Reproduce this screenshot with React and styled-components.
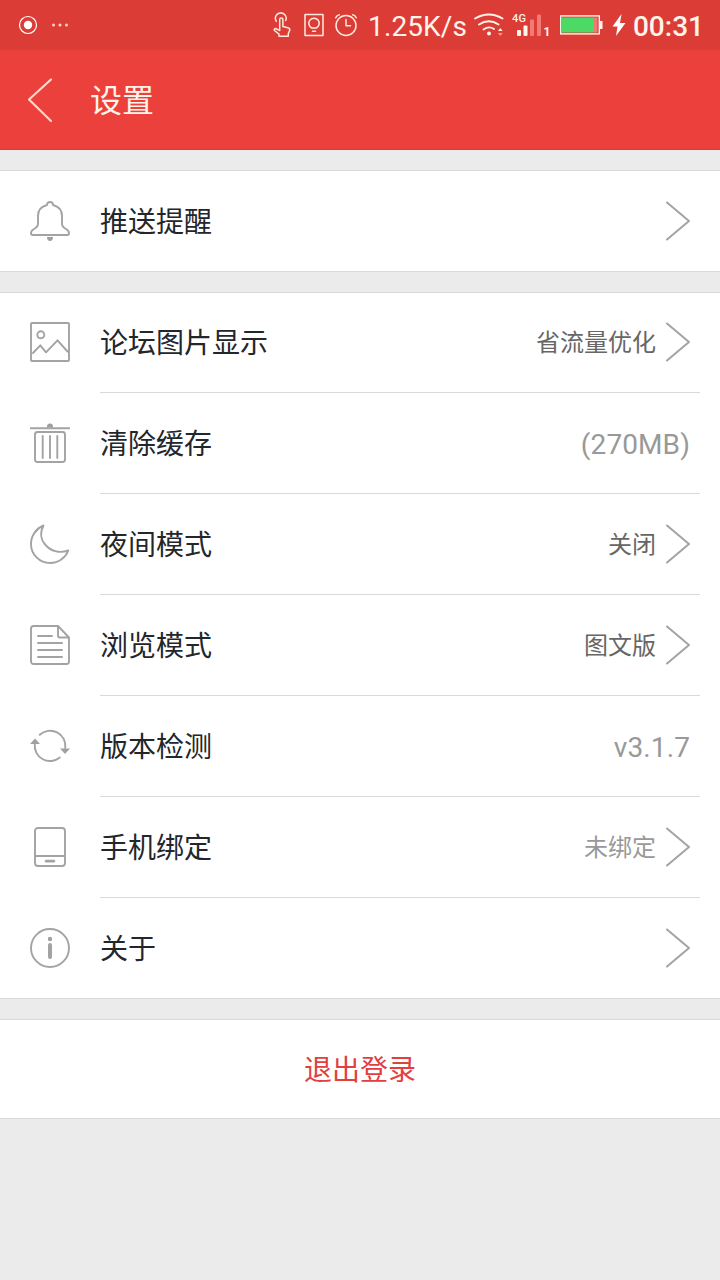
import React from "react";
import styled, { createGlobalStyle, css } from "styled-components";

const GlobalStyle = createGlobalStyle`
  * {
    box-sizing: border-box;
  }

  body {
    margin: 0;
    background: #ebebeb;
    font-family: Roboto, "Noto Sans CJK SC", sans-serif;
  }
`;

const Screen = styled.div`
  min-height: 1280px;
  background: #ebebeb;
`;

const StatusBar = styled.div`
  display: flex;
  align-items: center;
  justify-content: space-between;
  height: 50px;
  padding: 0 16px 0 18px;
  background: #db3d36;
  color: #fff3ea;
`;

const StatusGroup = styled.div`
  display: flex;
  align-items: center;
  height: 50px;
  gap: ${p => p.$gap || 0};

  svg {
    display: block;
    flex: none;
  }
`;

const StatusText = styled.span`
  padding-top: 3px;
  font-size: 28px;
  font-weight: ${p => (p.$bold ? 500 : 400)};
  line-height: 50px;
  letter-spacing: ${p => p.$spacing || 0};
`;

const Header = styled.header`
  display: flex;
  align-items: center;
  height: 100px;
  padding-left: 26px;
  gap: 36px;
  background: #ec403c;
  border-bottom: 1px solid #e6392f;
`;

const Title = styled.h1`
  margin: 0;
  padding-top: 2px;
  color: #fff3ea;
  font-size: 32px;
  font-weight: 400;
  line-height: 48px;
`;

const Content = styled.main`
  display: flex;
  flex-direction: column;
  gap: 20px;
  padding-top: 20px;
`;

const Card = styled.section`
  background: #fff;
  border-top: 1px solid #d9d9d9;
  border-bottom: 1px solid #d9d9d9;

  /* the long list keeps its top line inside the first row */
  ${p =>
    p.$list &&
    css`
      border: 0;
      box-shadow: inset 0 1px #d9d9d9, inset 0 -1px #d9d9d9;
    `}
`;

const Row = styled.div`
  display: flex;
  align-items: center;
  height: 100px;
  padding: 0 28px 0 30px;

  svg {
    display: block;
    flex: none;
  }
`;

const Divider = styled.div`
  height: 1px;
  margin: 0 20px 0 100px;
  background: ${p => (p.$last ? "transparent" : "#d9d9d9")};
`;

const Label = styled.span`
  flex: 1;
  padding: 4px 0 0 30px;
  color: #23262b;
  font-size: 28px;
  line-height: 40px;
`;

const Value = styled.span`
  margin-right: 8px;
  padding-top: 2px;
  color: ${p => (p.$muted ? "#999" : "#666")};
  font-size: 24px;
  line-height: 36px;
`;

const Figure = styled.span`
  margin-right: 2px;
  padding-top: 3px;
  color: #999;
  font-size: 28px;
  line-height: 36px;
  letter-spacing: 0.1px;
`;

const Logout = styled.button`
  display: block;
  width: 100%;
  height: 98px;
  padding: 4px 0 0;
  border: 0;
  background: none;
  color: #e04040;
  font-family: inherit;
  font-size: 28px;
  line-height: 94px;
`;

const StyledIcon = styled.svg`
  width: 40px;
  height: 40px;
  fill: none;
  stroke: #a3a3a3;
  stroke-width: 1.9;
  stroke-linecap: round;
  stroke-linejoin: round;

  .solid {
    fill: #a0a0a0;
    stroke: none;
  }
`;

const Icon = ({ children }) => (
  <StyledIcon viewBox="0 0 40 40">{children}</StyledIcon>
);

const icons = {
  bell: (
    <Icon>
      <path d="M17 4C17 2 18.200 1 20 1s3 1 3 3C29 5.500 32 9.500 32 15v7.500c0 2.500 1 4 4 5.500 2 1.200 3 2.500 3 4.200 0 1.300-.700 1.800-1.700 1.800H2.700C1.700 34 1 33.500 1 32.200 1 30.500 2 29.200 4 28c3-1.500 4-3 4-5.500V15C8 9.500 11 5.500 17 4z" />
      <path className="solid" d="M17 36h6c0 2.700-1.200 4-3 4s-3-1.300-3-4z" />
    </Icon>
  ),
  image: (
    <Icon>
      <rect x="1" y="1" width="38" height="38" rx="1" />
      <circle cx="10.800" cy="12.800" r="3.500" />
      <path d="M3 31l7.300-7.700 5.700 7 11.500-12L37.500 29.500" />
    </Icon>
  ),
  trash: (
    <Icon>
      <path d="M1 5.200h38" strokeLinecap="square" />
      <path className="solid" d="M16.800 4.500a3.200 4 0 0 1 6.400 0z" />
      <rect x="5" y="9" width="30" height="30" rx="2.500" />
      <path d="M12.700 13v22M20 13v22M27.300 13v22" />
    </Icon>
  ),
  moon: (
    <Icon>
      <path d="M13.500 1.500A20 20 0 0 0 1 20a19 19 0 0 0 19 19c8.500 0 15.500-5 18.300-12.500C30 29.500 21.500 27.500 16 21.500 11 16.500 9.500 9 13.500 1.500z" />
    </Icon>
  ),
  doc: (
    <Icon>
      <path d="M28 1H3.500A2.500 2.500 0 0 0 1 3.500v33A2.500 2.500 0 0 0 3.500 39h33a2.500 2.500 0 0 0 2.500-2.500V12.500L28 1v9.500a2 2 0 0 0 2 2h9" />
      <path d="M8 11h14M8 18h24M8 25h24M8 32h24" />
    </Icon>
  ),
  refresh: (
    <Icon>
      <path d="M9.700 8.800A15.300 15.300 0 0 1 35.300 22M29.800 31.500A15.300 15.300 0 0 1 4.800 18" />
      <path className="solid" d="M0 18l5-5.500L10 18zM30 22.500h10L35 28z" />
    </Icon>
  ),
  phone: (
    <Icon>
      <rect x="5" y="1" width="30" height="38" rx="3" />
      <path d="M5 29h30" />
      <path d="M16.200 34.200h7.600" strokeWidth="2.800" />
    </Icon>
  ),
  info: (
    <Icon>
      <circle cx="20" cy="20" r="19" />
      <circle className="solid" cx="20" cy="11" r="2.200" />
      <path d="M20 17v12" strokeWidth="4" />
    </Icon>
  )
};

const Chevron = () => (
  <svg width="28" height="42" viewBox="0 0 28 42" fill="none">
    <path
      d="M3 2.500L25 21 3 39.500"
      stroke="#a3a3a3"
      strokeWidth="2"
      strokeLinecap="round"
      strokeLinejoin="round"
    />
  </svg>
);

const BackArrow = () => (
  <svg width="28" height="46" viewBox="0 0 28 46" fill="none">
    <path
      d="M25 2.500L3 22.500 25 44"
      stroke="#ffd9ce"
      strokeWidth="2.200"
      strokeLinecap="round"
      strokeLinejoin="round"
    />
  </svg>
);

const Recording = () => (
  <svg width="52" height="20" viewBox="18 15 52 20">
    <circle cx="28" cy="25" r="8.500" fill="none" stroke="#fff" strokeWidth="1.200" />
    <circle cx="28" cy="25" r="4.200" fill="#fff" />
    <g fill="#ffd3c8">
      <circle cx="53.500" cy="25" r="1.500" />
      <circle cx="60" cy="25" r="1.500" />
      <circle cx="66.500" cy="25" r="1.500" />
    </g>
  </svg>
);

// touch, smart light and alarm indicators
const Indicators = () => (
  <svg
    width="86"
    height="26"
    viewBox="272 12 86 26"
    fill="none"
    stroke="#ffe9de"
    strokeWidth="1.500"
    strokeLinecap="round"
    strokeLinejoin="round"
  >
    <path d="M276.300 21.300a5.400 5.400 0 1 1 9.400-.800" />
    <path d="M279.700 30.500v-11a1.600 1.600 0 0 1 3.200 0v7l5 1.200c1.500.400 2.100 1.300 1.900 2.600l-1.500 3.200v2.700h-9.300v-2l-4.500-3.700c-.800-1 .300-2.300 1.800-1.700z" />
    <rect x="305" y="14.500" width="18" height="21" />
    <path d="M311.700 28a5.200 5.200 0 1 1 4.600 0zM312.500 31.300h3" />
    <circle cx="346" cy="25.500" r="10" />
    <path d="M346 19.500v6.300h4.500M335.700 17.700q1-2.500 3.700-3M356.300 17.700q-1-2.500-3.700-3" />
  </svg>
);

const Wifi = () => (
  <svg
    width="30"
    height="24"
    viewBox="474 13 30 24"
    fill="none"
    stroke="#fff3ea"
    strokeWidth="1.800"
    strokeLinecap="round"
  >
    <path d="M475 18.500q14-8 27.500 0M479 24.500q10-6.500 19.500 0M483.500 29.500q5.500-4 10.500-.500" />
    <circle cx="489" cy="33.500" r="2" fill="#fff3ea" stroke="none" />
    <path d="M498 31l2.300-3 2.300 3z" fill="#fff3ea" stroke="none" />
    <path d="M498 33l2.300 3 2.300-3z" fill="#ff9d92" stroke="none" />
  </svg>
);

const SignalText = styled.text`
  fill: #fff3ea;
  font-family: Roboto, sans-serif;
  font-weight: ${p => (p.$bold ? 700 : 500)};
`;

const Signal = () => (
  <svg width="38" height="26" viewBox="512 12 38 26">
    <SignalText x="512" y="22" fontSize="11" textLength="14">
      4G
    </SignalText>
    <g fill="#fff3ea">
      <rect x="517" y="30" width="4" height="6" rx="1" />
      <rect x="523.500" y="25.500" width="4" height="10.500" rx="1" />
    </g>
    <g fill="#f27b73">
      <rect x="530" y="19.500" width="4" height="16.500" rx="1" />
      <rect x="537" y="14.500" width="4" height="21.500" rx="1" />
    </g>
    <SignalText $bold x="543.500" y="36" fontSize="12">
      1
    </SignalText>
  </svg>
);

const Battery = () => (
  <svg width="43" height="20" viewBox="560 15 43 20">
    <rect x="560.700" y="15.900" width="38.600" height="18" fill="none" stroke="#fff3ea" strokeWidth="1.400" />
    <rect x="562" y="17.500" width="32" height="15" fill="#4cd964" />
    <rect x="594" y="17.500" width="3.500" height="15" fill="#ee7b73" />
    <rect x="600" y="21" width="2.500" height="8" fill="#fff3ea" />
  </svg>
);

const Bolt = () => (
  <svg width="14" height="24" viewBox="612 13 14 24">
    <path d="M621.500 14L612.500 26.500h5L616 36l9.500-13h-5.500z" fill="#fff" />
  </svg>
);

const settings = [
  { icon: icons.image, label: "论坛图片显示", value: "省流量优化", link: true },
  { icon: icons.trash, label: "清除缓存", figure: "(270MB)" },
  { icon: icons.moon, label: "夜间模式", value: "关闭", link: true },
  { icon: icons.doc, label: "浏览模式", value: "图文版", link: true },
  { icon: icons.refresh, label: "版本检测", figure: "v3.1.7" },
  { icon: icons.phone, label: "手机绑定", value: "未绑定", muted: true, link: true },
  { icon: icons.info, label: "关于", link: true }
];

function SettingRow({ icon, label, value, figure, muted, link }) {
  return (
    <Row>
      {icon}
      <Label>{label}</Label>
      {value && <Value $muted={muted}>{value}</Value>}
      {figure && <Figure>{figure}</Figure>}
      {link && <Chevron />}
    </Row>
  );
}

function App() {
  return (
    <Screen>
      <GlobalStyle />
      <StatusBar>
        <StatusGroup>
          <Recording />
        </StatusGroup>
        <StatusGroup $gap="10px">
          <StatusGroup $gap="7px">
            <StatusGroup $gap="10px">
              <Indicators />
              <StatusText $spacing="0.1px">1.25K/s</StatusText>
            </StatusGroup>
            <StatusGroup $gap="8px">
              <Wifi />
              <Signal />
            </StatusGroup>
          </StatusGroup>
          <StatusGroup $gap="9px">
            <Battery />
            <StatusGroup $gap="7px">
              <Bolt />
              <StatusText $bold>00:31</StatusText>
            </StatusGroup>
          </StatusGroup>
        </StatusGroup>
      </StatusBar>
      <Header>
        <BackArrow />
        <Title>设置</Title>
      </Header>
      <Content>
        <Card>
          <SettingRow icon={icons.bell} label="推送提醒" link />
        </Card>
        <Card $list>
          {settings.map((item, i) => (
            <React.Fragment key={item.label}>
              <SettingRow {...item} />
              <Divider $last={i === settings.length - 1} />
            </React.Fragment>
          ))}
        </Card>
        <Card>
          <Logout>退出登录</Logout>
        </Card>
      </Content>
    </Screen>
  );
}

export default App;
